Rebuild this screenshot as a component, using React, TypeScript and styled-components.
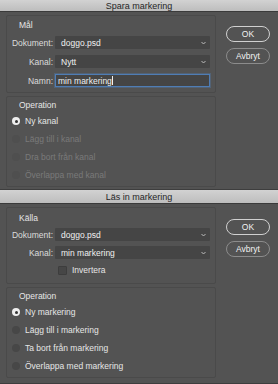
import React from "react";
import styled, { createGlobalStyle } from "styled-components";

const Global = createGlobalStyle`
  html, body {
    margin: 0;
    padding: 0;
    background: #535353;
  }
  body {
    font-family: "Liberation Sans", Arial, sans-serif;
    font-size: 8.5px;
    color: #e6e6e6;
  }
`;

const Page = styled.div`
  width: 278px;
  height: 384px;
  overflow: hidden;
  display: flex;
  flex-direction: column;
`;

const Dialog = styled.section<{ $h: number }>`
  height: ${(p) => p.$h}px;
  display: flex;
  flex-direction: column;
  background: #535353;
  border-bottom: 1px solid #3e3e3e;
  box-sizing: border-box;
`;

const TitleBar = styled.div<{ $h: number }>`
  height: ${(p) => p.$h}px;
  flex: none;
  display: flex;
  align-items: center;
  justify-content: center;
  background: linear-gradient(#d2d2d2, #bdbdbd);
  border-bottom: 1px solid #3a3a3a;
  color: #262626;
  font-size: 9px;
  box-sizing: border-box;
`;

const Body = styled.div`
  flex: 1;
  display: flex;
  padding: 3px 0 0 6px;
`;

const LeftCol = styled.div`
  width: 210px;
  display: flex;
  flex-direction: column;
  gap: 3px;
`;

const RightCol = styled.div<{ $top: number }>`
  margin-left: 10px;
  padding-top: ${(p) => p.$top}px;
  display: flex;
  flex-direction: column;
  gap: 6px;
`;

const Button = styled.div<{ $primary?: boolean }>`
  width: 44px;
  height: 16px;
  box-sizing: border-box;
  border-radius: 9px;
  border: 1px solid ${(p) => (p.$primary ? "#d0d0d0" : "#8c8c8c")};
  display: flex;
  align-items: center;
  justify-content: center;
  color: #f2f2f2;
  font-size: 8.5px;
  background: #535353;
`;

const Group = styled.div<{ $h: number }>`
  height: ${(p) => p.$h}px;
  box-sizing: border-box;
  border: 1px solid #4a4a4a;
  border-radius: 2px;
  padding: 0 4px 0 0;
  display: flex;
  flex-direction: column;
`;

const Legend = styled.div<{ $top: number }>`
  margin-top: ${(p) => p.$top}px;
  margin-left: 12px;
  height: 10px;
  line-height: 10px;
  color: #e6e6e6;
`;

const Rows = styled.div<{ $top: number; $gap: number }>`
  margin-top: ${(p) => p.$top}px;
  display: flex;
  flex-direction: column;
  gap: ${(p) => p.$gap}px;
`;

const Row = styled.div`
  display: flex;
  align-items: center;
  height: 13px;
`;

const Label = styled.div`
  width: 46px;
  text-align: right;
  margin-right: 2px;
  color: #dcdcdc;
`;

const Select = styled.div`
  width: 155px;
  height: 13px;
  box-sizing: border-box;
  background: #454545;
  border-radius: 1px;
  display: flex;
  align-items: center;
  padding: 0 4px 0 6px;
  color: #f0f0f0;
`;

const SelectText = styled.span`
  flex: 1;
`;

const Input = styled.div`
  width: 155px;
  height: 13px;
  box-sizing: border-box;
  background: #454545;
  border: 1px solid #4f7db5;
  box-shadow: 0 0 0 1px rgba(79, 125, 181, 0.35);
  display: flex;
  align-items: center;
  padding: 0 2px;
  color: #f0f0f0;
`;

const Caret = styled.span`
  display: inline-block;
  width: 1px;
  height: 9px;
  background: #f0f0f0;
`;

const CheckRow = styled.div`
  display: flex;
  align-items: center;
  height: 12px;
  padding-left: 51px;
  gap: 5px;
`;

const CheckBox = styled.span`
  width: 7px;
  height: 7px;
  border-radius: 1px;
  background: #464646;
  border: 1px solid #3d3d3d;
`;

const RadioRow = styled.div<{ $disabled?: boolean }>`
  display: flex;
  align-items: center;
  height: 12px;
  padding-left: 5px;
  gap: 5px;
  color: ${(p) => (p.$disabled ? "#7a7a7a" : "#e6e6e6")};
`;

const RadioDot = styled.span<{ $on?: boolean; $disabled?: boolean }>`
  width: 8px;
  height: 8px;
  box-sizing: border-box;
  border-radius: 50%;
  flex: none;
  background: ${(p) => (p.$on ? "#eeeeee" : p.$disabled ? "#4f4f4f" : "#474747")};
  display: flex;
  align-items: center;
  justify-content: center;
  &::after {
    content: "";
    width: 3px;
    height: 3px;
    border-radius: 50%;
    background: ${(p) => (p.$on ? "#333" : "transparent")};
  }
`;

const Chevron = () => (
  <svg width="5" height="4" viewBox="0 0 5 4">
    <path d="M0.5 1 L2.5 3 L4.5 1" stroke="#bbbbbb" strokeWidth="1" fill="none" />
  </svg>
);

const SelectBox = ({ value }: { value: string }) => (
  <Select>
    <SelectText>{value}</SelectText>
    <Chevron />
  </Select>
);

type Opt = { label: string; on?: boolean; disabled?: boolean };

const OperationGroup = ({ options }: { options: Opt[] }) => (
  <Group $h={91}>
    <Legend $top={3}>Operation</Legend>
    <Rows $top={5} $gap={6}>
      {options.map((o) => (
        <RadioRow key={o.label} $disabled={o.disabled}>
          <RadioDot $on={o.on} $disabled={o.disabled} />
          {o.label}
        </RadioRow>
      ))}
    </Rows>
  </Group>
);

export default function App() {
  return (
    <Page>
      <Global />
      <Dialog $h={190}>
        <TitleBar $h={12}>Spara markering</TitleBar>
        <Body>
          <LeftCol>
            <Group $h={78}>
              <Legend $top={4}>Mål</Legend>
              <Rows $top={6} $gap={6}>
                <Row>
                  <Label>Dokument:</Label>
                  <SelectBox value="doggo.psd" />
                </Row>
                <Row>
                  <Label>Kanal:</Label>
                  <SelectBox value="Nytt" />
                </Row>
                <Row>
                  <Label>Namn:</Label>
                  <Input>
                    min markering
                    <Caret />
                  </Input>
                </Row>
              </Rows>
            </Group>
            <OperationGroup
              options={[
                { label: "Ny kanal", on: true },
                { label: "Lägg till i kanal", disabled: true },
                { label: "Dra bort från kanal", disabled: true },
                { label: "Överlappa med kanal", disabled: true },
              ]}
            />
          </LeftCol>
          <RightCol $top={11}>
            <Button $primary>OK</Button>
            <Button>Avbryt</Button>
          </RightCol>
        </Body>
      </Dialog>
      <Dialog $h={194}>
        <TitleBar $h={14}>Läs in markering</TitleBar>
        <Body>
          <LeftCol>
            <Group $h={77}>
              <Legend $top={5}>Källa</Legend>
              <Rows $top={5} $gap={5}>
                <Row>
                  <Label>Dokument:</Label>
                  <SelectBox value="doggo.psd" />
                </Row>
                <Row>
                  <Label>Kanal:</Label>
                  <SelectBox value="min markering" />
                </Row>
                <CheckRow>
                  <CheckBox />
                  Invertera
                </CheckRow>
              </Rows>
            </Group>
            <OperationGroup
              options={[
                { label: "Ny markering", on: true },
                { label: "Lägg till i markering" },
                { label: "Ta bort från markering" },
                { label: "Överlappa med markering" },
              ]}
            />
          </LeftCol>
          <RightCol $top={12}>
            <Button $primary>OK</Button>
            <Button>Avbryt</Button>
          </RightCol>
        </Body>
      </Dialog>
    </Page>
  );
}
